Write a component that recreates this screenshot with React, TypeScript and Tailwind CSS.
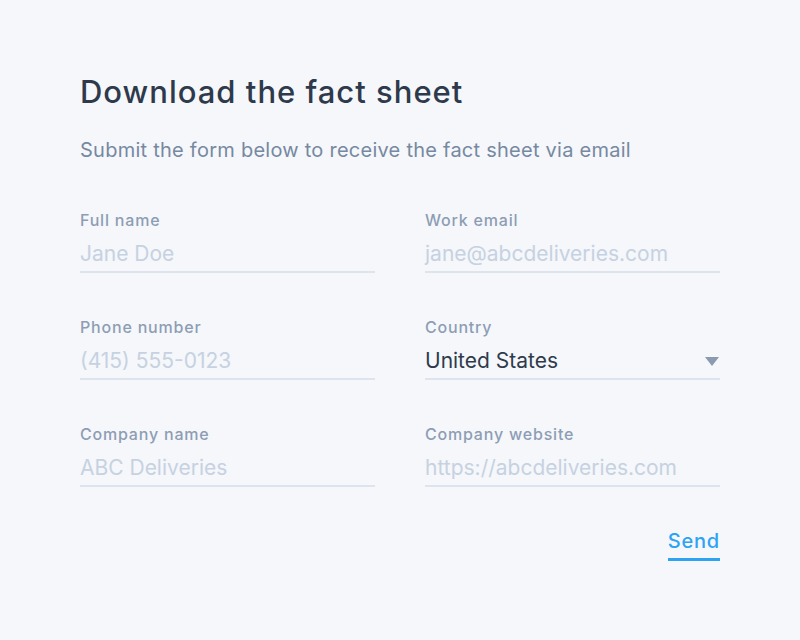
const fields = [
  { label: 'Full name', placeholder: 'Jane Doe' },
  { label: 'Work email', placeholder: 'jane@abcdeliveries.com' },
  { label: 'Phone number', placeholder: '(415) 555-0123' },
  { label: 'Country', value: 'United States', select: true },
  { label: 'Company name', placeholder: 'ABC Deliveries' },
  { label: 'Company website', placeholder: 'https://abcdeliveries.com' },
];

function Field({ label, placeholder, value, select }: { label: string; placeholder?: string; value?: string; select?: boolean }) {
  return (
    <div className="flex flex-col">
      <span className="text-[16px] leading-[24px] font-medium tracking-[0.8px] text-[#8d9db4]">{label}</span>
      <div className="mt-[8px] flex items-center justify-between border-b-2 border-[#dee4ed] pb-[3px]">
        {select ? (
          <span className="text-[21px] leading-[28px] text-[#2f3b4c]">{value}</span>
        ) : (
          <span className="text-[21px] leading-[28px] text-[#c6d2e1]">{placeholder}</span>
        )}
        {select && (
          <svg width="14" height="9" viewBox="0 0 14 9" className="mr-[1px]">
            <path d="M0 0 L14 0 L7 9 Z" fill="#8a9ab1" />
          </svg>
        )}
      </div>
    </div>
  );
}

export default function App() {
  return (
    <div className="min-h-[640px] w-full bg-[#f5f7fb] font-['Inter',sans-serif]">
      <div className="px-[80px] pt-[72px]">
        <h1 className="text-[31px] leading-[40px] font-medium tracking-[1px] text-[#2e3a4b]">Download the fact sheet</h1>
        <p className="mt-[24px] text-[20px] leading-[28px] tracking-[0.25px] text-[#7689a1]">
          Submit the form below to receive the fact sheet via email
        </p>
        <div className="mt-[44px] grid grid-cols-2 gap-x-[50px] gap-y-[42px]">
          {fields.map((f) => (
            <Field key={f.label} {...f} />
          ))}
        </div>
        <div className="mt-[41px] flex justify-end">
          <button className="border-b-[3px] border-[#2ea3f2] pb-[4px] text-[20px] leading-[26px] font-medium tracking-[0.8px] text-[#2ea3f2]">
            Send
          </button>
        </div>
      </div>
    </div>
  );
}
